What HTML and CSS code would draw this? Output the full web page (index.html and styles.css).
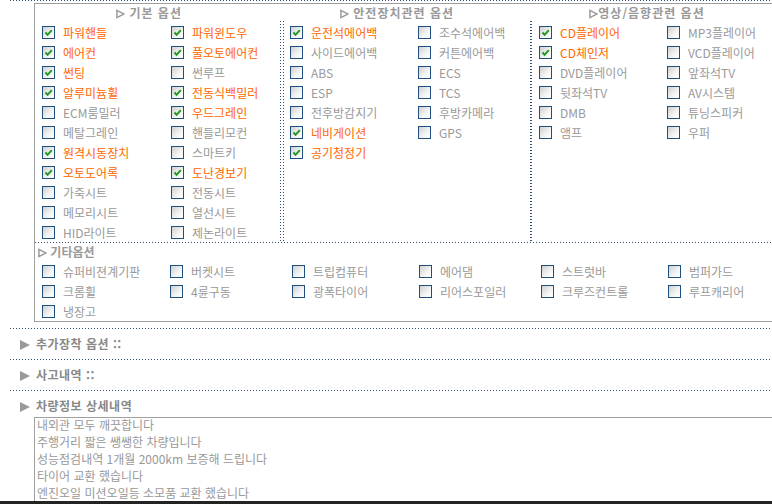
FILE: index.html
```html
<!DOCTYPE html>
<html lang="ko">
<head>
<meta charset="UTF-8" />
<title>차량 옵션</title>
<link rel="stylesheet" href="styles.css">
</head>
<body>
<div class="page">
  <div class="dots"></div>

  <div class="opt-box">
    <div class="groups">
      <div class="group g1">
        <div class="group-title"><svg class="tri-o" viewBox="0 0 10 10"><polygon points="1,1 9,5 1,9" /></svg> 기본 옵션</div>
        <div class="list">
          <label class="on"><span class="chk"><svg viewBox="0 0 11 11"><path d="M2.5 5.5 L4.6 7.8 L8.8 3.2" /></svg></span>파워핸들</label>
          <label class="on"><span class="chk"><svg viewBox="0 0 11 11"><path d="M2.5 5.5 L4.6 7.8 L8.8 3.2" /></svg></span>파워윈도우</label>
          <label class="on"><span class="chk"><svg viewBox="0 0 11 11"><path d="M2.5 5.5 L4.6 7.8 L8.8 3.2" /></svg></span>에어컨</label>
          <label class="on"><span class="chk"><svg viewBox="0 0 11 11"><path d="M2.5 5.5 L4.6 7.8 L8.8 3.2" /></svg></span>풀오토에어컨</label>
          <label class="on"><span class="chk"><svg viewBox="0 0 11 11"><path d="M2.5 5.5 L4.6 7.8 L8.8 3.2" /></svg></span>썬팅</label>
          <label><span class="chk"></span>썬루프</label>
          <label class="on"><span class="chk"><svg viewBox="0 0 11 11"><path d="M2.5 5.5 L4.6 7.8 L8.8 3.2" /></svg></span>알루미늄휠</label>
          <label class="on"><span class="chk"><svg viewBox="0 0 11 11"><path d="M2.5 5.5 L4.6 7.8 L8.8 3.2" /></svg></span>전동식백밀러</label>
          <label><span class="chk"></span>ECM룸밀러</label>
          <label class="on"><span class="chk"><svg viewBox="0 0 11 11"><path d="M2.5 5.5 L4.6 7.8 L8.8 3.2" /></svg></span>우드그레인</label>
          <label><span class="chk"></span>메탈그레인</label>
          <label><span class="chk"></span>핸들리모컨</label>
          <label class="on"><span class="chk"><svg viewBox="0 0 11 11"><path d="M2.5 5.5 L4.6 7.8 L8.8 3.2" /></svg></span>원격시동장치</label>
          <label><span class="chk"></span>스마트키</label>
          <label class="on"><span class="chk"><svg viewBox="0 0 11 11"><path d="M2.5 5.5 L4.6 7.8 L8.8 3.2" /></svg></span>오토도어록</label>
          <label class="on"><span class="chk"><svg viewBox="0 0 11 11"><path d="M2.5 5.5 L4.6 7.8 L8.8 3.2" /></svg></span>도난경보기</label>
          <label><span class="chk"></span>가죽시트</label>
          <label><span class="chk"></span>전동시트</label>
          <label><span class="chk"></span>메모리시트</label>
          <label><span class="chk"></span>열선시트</label>
          <label><span class="chk"></span>HID라이트</label>
          <label><span class="chk"></span>제논라이트</label>
        </div>
      </div>

      <div class="group g2">
        <div class="group-title"><svg class="tri-o" viewBox="0 0 10 10"><polygon points="1,1 9,5 1,9" /></svg> 안전장치관련 옵션</div>
        <div class="list">
          <label class="on"><span class="chk"><svg viewBox="0 0 11 11"><path d="M2.5 5.5 L4.6 7.8 L8.8 3.2" /></svg></span>운전석에어백</label>
          <label><span class="chk"></span>조수석에어백</label>
          <label><span class="chk"></span>사이드에어백</label>
          <label><span class="chk"></span>커튼에어백</label>
          <label><span class="chk"></span>ABS</label>
          <label><span class="chk"></span>ECS</label>
          <label><span class="chk"></span>ESP</label>
          <label><span class="chk"></span>TCS</label>
          <label><span class="chk"></span>전후방감지기</label>
          <label><span class="chk"></span>후방카메라</label>
          <label class="on"><span class="chk"><svg viewBox="0 0 11 11"><path d="M2.5 5.5 L4.6 7.8 L8.8 3.2" /></svg></span>네비게이션</label>
          <label><span class="chk"></span>GPS</label>
          <label class="on"><span class="chk"><svg viewBox="0 0 11 11"><path d="M2.5 5.5 L4.6 7.8 L8.8 3.2" /></svg></span>공기청정기</label>
        </div>
      </div>

      <div class="group g3">
        <div class="group-title"><svg class="tri-o" viewBox="0 0 10 10"><polygon points="1,1 9,5 1,9" /></svg>영상/음향관련 옵션</div>
        <div class="list">
          <label class="on"><span class="chk"><svg viewBox="0 0 11 11"><path d="M2.5 5.5 L4.6 7.8 L8.8 3.2" /></svg></span>CD플레이어</label>
          <label><span class="chk"></span>MP3플레이어</label>
          <label class="on"><span class="chk"><svg viewBox="0 0 11 11"><path d="M2.5 5.5 L4.6 7.8 L8.8 3.2" /></svg></span>CD체인저</label>
          <label><span class="chk"></span>VCD플레이어</label>
          <label><span class="chk"></span>DVD플레이어</label>
          <label><span class="chk"></span>앞좌석TV</label>
          <label><span class="chk"></span>뒷좌석TV</label>
          <label><span class="chk"></span>AV시스템</label>
          <label><span class="chk"></span>DMB</label>
          <label><span class="chk"></span>튜닝스피커</label>
          <label><span class="chk"></span>앰프</label>
          <label><span class="chk"></span>우퍼</label>
        </div>
      </div>
    </div>

    <div class="etc">
      <div class="etc-title"><svg class="tri-o" viewBox="0 0 10 10"><polygon points="1,1 9,5 1,9" /></svg> 기타옵션</div>
      <div class="etc-list">
        <label><span class="chk"></span>슈퍼비젼계기판</label>
        <label><span class="chk"></span>버켓시트</label>
        <label><span class="chk"></span>트립컴퓨터</label>
        <label><span class="chk"></span>에어댐</label>
        <label><span class="chk"></span>스트럿바</label>
        <label><span class="chk"></span>범퍼가드</label>
        <label><span class="chk"></span>크롬휠</label>
        <label><span class="chk"></span>4륜구동</label>
        <label><span class="chk"></span>광폭타이어</label>
        <label><span class="chk"></span>리어스포일러</label>
        <label><span class="chk"></span>크루즈컨트롤</label>
        <label><span class="chk"></span>루프캐리어</label>
        <label><span class="chk"></span>냉장고</label>
      </div>
    </div>
  </div>

  <div class="dots sep"></div>
  <div class="sec"><svg class="tri" viewBox="0 0 10 10"><polygon points="0,0 10,5 0,10" /></svg>추가장착 옵션 ::</div>
  <div class="dots"></div>
  <div class="sec"><svg class="tri" viewBox="0 0 10 10"><polygon points="0,0 10,5 0,10" /></svg>사고내역 ::</div>
  <div class="dots"></div>
  <div class="sec last"><svg class="tri" viewBox="0 0 10 10"><polygon points="0,0 10,5 0,10" /></svg>차량정보 상세내역</div>

  <div class="detail">
    <div class="detail-text">
      내외관 모두 깨끗합니다<br>
      주행거리 짧은 쌩쌩한 차량입니다<br>
      성능점검내역 1개월 2000km 보증해 드립니다<br>
      타이어 교환 했습니다<br>
      엔진오일 미션오일등 소모품 교환 했습니다
    </div>
  </div>
  <div class="status"></div>
</div>
</body>
</html>
```

FILE: styles.css
```css
html, body {
  margin: 0;
  padding: 0;
  overflow: hidden;
  background: #fff;
}
body {
  font-family: "Noto Sans CJK KR", "Noto Sans", sans-serif;
  font-size: 12px;
  color: #999;
}
.page {
  width: 820px;
}
.dots {
  height: 1px;
  margin-left: 10px;
  background: linear-gradient(to right, #33507a 1px, transparent 1px) 0 0 / 3px 1px repeat-x;
}
.opt-box {
  margin: 2px 0 0 34px;
  border: 1px solid #a0a0a0;
  border-right: none;
}
.groups {
  display: grid;
  grid-template-columns: 246px 250px 250px;
}
.group-title {
  height: 17px;
  line-height: 17px;
  text-align: center;
  padding-right: 18px;
  font-weight: bold;
  letter-spacing: 1px;
  color: #999;
}
.tri-o {
  width: 9px;
  height: 10px;
  vertical-align: -1px;
}
.tri-o polygon {
  fill: none;
  stroke: #999;
  stroke-width: 1.6;
}
.list {
  display: grid;
  grid-template-columns: 129px 1fr;
  grid-auto-rows: 20px;
  padding: 1px 0 0 7px;
  height: 220px;
  background: linear-gradient(to bottom, #33507a 1px, transparent 1px) right top / 1px 3px repeat-y;
}
.g2 .list {
  margin-left: 2px;
  padding-left: 7px;
  background:
    linear-gradient(to bottom, #33507a 1px, transparent 1px) left top / 1px 3px repeat-y,
    linear-gradient(to bottom, #33507a 1px, transparent 1px) right top / 1px 3px repeat-y;
}
.g2 .list, .g3 .list {
  grid-template-columns: 128px 1fr;
}
.g3 .list {
  padding-left: 8px;
  background: linear-gradient(to bottom, #33507a 1px, transparent 1px) left top / 1px 3px repeat-y;
}
label {
  display: flex;
  align-items: center;
  white-space: nowrap;
  color: #999;
}
label.on {
  color: #ff6600;
}
.chk {
  box-sizing: border-box;
  width: 13px;
  height: 13px;
  margin-right: 8px;
  border: 1px solid #1e4f7d;
  background: linear-gradient(135deg, #cfcfcf, #f4f4f4 60%, #fff);
  display: inline-flex;
  align-items: center;
  justify-content: center;
  flex: none;
}
.chk svg {
  width: 11px;
  height: 11px;
}
.chk path {
  fill: none;
  stroke: #1f9a1f;
  stroke-width: 2;
}
.etc {
  background: linear-gradient(to right, #33507a 1px, transparent 1px) 0 0 / 3px 1px repeat-x;
  padding-top: 1px;
}
.etc-title {
  height: 18px;
  line-height: 17px;
  padding-left: 3px;
  font-weight: bold;
}
.etc-list {
  display: grid;
  grid-template-columns: 128px 122px 127px 122px 127px 127px;
  grid-auto-rows: 20px;
  padding-left: 7px;
}
.sep {
  margin-top: 6px;
}
.sec {
  height: 30px;
  line-height: 29px;
  padding-left: 20px;
  font-weight: bold;
  letter-spacing: 0.5px;
  color: #888;
}
.sec.last {
  height: 26px;
}
.tri {
  width: 10px;
  height: 10px;
  margin-right: 6px;
  vertical-align: -1px;
}
.tri polygon {
  fill: #999;
}
.detail {
  margin-left: 34px;
  height: 83px;
  border-top: 1px solid #a0a0a0;
  border-left: 1px solid #a0a0a0;
  overflow: hidden;
}
.detail-text {
  margin-top: -2px;
  padding-left: 2px;
  line-height: 17px;
  color: #999;
}
.status {
  height: 10px;
  background: #232323;
}
```
